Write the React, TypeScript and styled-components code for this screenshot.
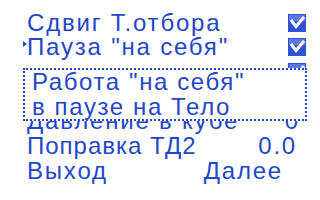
import React from "react";
import styled, { createGlobalStyle } from "styled-components";

const Global = createGlobalStyle`
  html, body {
    margin: 0;
    padding: 0;
    background: #ffffff;
  }
`;

const LCD = "#2346c8";

const Screen = styled.div`
  position: relative;
  width: 320px;
  height: 200px;
  overflow: hidden;
  background: #ffffff;
  color: ${LCD};
  font-family: "Liberation Sans", Arial, sans-serif;
  font-size: 24px;
  padding-top: 9.5px;
  box-sizing: border-box;
`;

const Menu = styled.ul`
  list-style: none;
  margin: 0;
  padding: 0;
`;

const Row = styled.li`
  display: grid;
  grid-template-columns: 4px 1fr auto;
  align-items: center;
  height: 24.7px;
  line-height: 25px;
  padding: 0 14px 0 23px;
  white-space: nowrap;
`;

const Marker = styled.span<{ $on?: boolean }>`
  width: 0;
  height: 0;
  border-top: 3px solid transparent;
  border-bottom: 3px solid transparent;
  border-left: 4px solid ${(p) => (p.$on ? LCD : "transparent")};
  margin-top: -6px;
`;

const Label = styled.span<{ $ls?: number }>`
  letter-spacing: ${(p) => p.$ls ?? 1.8}px;
`;

const Value = styled.span<{ $pad?: number }>`
  letter-spacing: 1.8px;
  margin-right: ${(p) => p.$pad ?? 0}px;
`;

const Box = styled.svg`
  display: block;
  width: 18px;
  height: 18px;
  margin-top: 1px;
`;

const Hint = styled.div`
  position: absolute;
  left: 23px;
  top: 68px;
  width: 284px;
  height: 53px;
  box-sizing: border-box;
  border: 2px dotted ${LCD};
  background: #ffffff;
  padding: 0 0 0 7px;
  line-height: 24.5px;
  letter-spacing: 1.6px;
  white-space: nowrap;
`;

const HintLine = styled.div``;

function Check() {
  return (
    <Box viewBox="0 0 18 18">
      <rect x="0" y="0" width="18" height="18" fill="#2f52d4" />
      <rect x="1" y="1" width="16" height="6" fill="#5a78e0" />
      <path d="M3 6 L8 12.5 L16 3" fill="none" stroke="#ffffff" strokeWidth="3" />
    </Box>
  );
}

type Item = {
  label: string;
  kind: "check" | "value" | "none";
  value?: string;
  pad?: number;
  on?: boolean;
  ls?: number;
};

// rows 3 and 4 sit under the hint box, only the third row's box peeks out
const items: Item[] = [
  { label: "Сдвиг Т.отбора", kind: "check" },
  { label: "Пауза \"на себя\"", kind: "check", on: true },
  { label: "", kind: "check" },
  { label: "", kind: "none" },
  { label: "Давление в кубе", kind: "value", value: "0", pad: 6 },
  { label: "Поправка ТД2", kind: "value", value: "0.0", pad: 9, ls: 1 },
];

export default function App() {
  return (
    <>
      <Global />
      <Screen>
        <Menu>
          {items.map((it, i) => (
            <Row key={i}>
              <Marker $on={it.on} />
              <Label $ls={it.ls}>{it.label}</Label>
              {it.kind === "check" && <Check />}
              {it.kind === "value" && <Value $pad={it.pad}>{it.value}</Value>}
            </Row>
          ))}
          <Row>
            <Marker />
            <Label>Выход</Label>
            <Value $pad={23}>Далее</Value>
          </Row>
        </Menu>
        <Hint>
          <HintLine>Работа "на себя"</HintLine>
          <HintLine>в паузе на Тело</HintLine>
        </Hint>
      </Screen>
    </>
  );
}
